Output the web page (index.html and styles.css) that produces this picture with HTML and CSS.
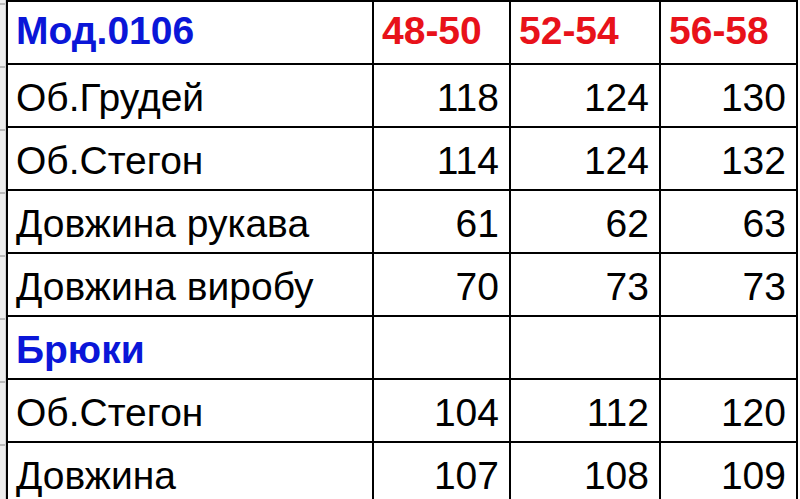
FILE: index.html
```html
<!DOCTYPE html>
<html lang="uk">
<head>
<meta charset="utf-8">
<title>Мод.0106</title>
<link rel="stylesheet" href="styles.css">
</head>
<body>
<div class="sheet">
  <div class="gutter"></div>
  <div class="main">
    <div class="topstrip">
      <div></div><div></div><div></div><div></div>
    </div>
    <div class="grid">
      <div class="cell head blue">Мод.0106</div>
      <div class="cell head red">48-50</div>
      <div class="cell head red">52-54</div>
      <div class="cell head red">56-58</div>

      <div class="cell">Об.Грудей</div>
      <div class="cell num">118</div>
      <div class="cell num">124</div>
      <div class="cell num">130</div>

      <div class="cell">Об.Стегон</div>
      <div class="cell num">114</div>
      <div class="cell num">124</div>
      <div class="cell num">132</div>

      <div class="cell">Довжина рукава</div>
      <div class="cell num">61</div>
      <div class="cell num">62</div>
      <div class="cell num">63</div>

      <div class="cell">Довжина виробу</div>
      <div class="cell num">70</div>
      <div class="cell num">73</div>
      <div class="cell num">73</div>

      <div class="cell bold blue">Брюки</div>
      <div class="cell num"></div>
      <div class="cell num"></div>
      <div class="cell num"></div>

      <div class="cell">Об.Стегон</div>
      <div class="cell num">104</div>
      <div class="cell num">112</div>
      <div class="cell num">120</div>

      <div class="cell">Довжина</div>
      <div class="cell num">107</div>
      <div class="cell num">108</div>
      <div class="cell num">109</div>
    </div>
  </div>
</div>
</body>
</html>
```
FILE: styles.css
```css
html, body {
  margin: 0;
  padding: 0;
  background: #ffffff;
  height: 499px;
  overflow: hidden;
}

.sheet {
  display: flex;
  height: 499px;
  font-family: "Liberation Sans", Arial, sans-serif;
}

.gutter {
  width: 5px;
  flex: none;
  border-right: 1px solid #cfcfcf;
  background-color: #ededed;
  background-image: linear-gradient(
    to bottom,
    transparent 0px,
    transparent 61px,
    #b9b9b9 61px,
    #b9b9b9 63px
  );
  background-size: 100% 63px;
  background-position: 0 5px;
}

.main {
  display: flex;
  flex-direction: column;
}

.topstrip {
  height: 3px;
  display: grid;
  grid-template-columns: 366px 137px 150px 137px;
}

.topstrip div {
  border-right: 1px solid #d4d4d4;
}

.grid {
  display: grid;
  grid-template-columns: 364px 135px 148px 135px;
  grid-auto-rows: 61px;
  gap: 2px;
  padding: 2px;
  background: #000000;
  width: max-content;
}

.cell {
  background: #ffffff;
  display: flex;
  align-items: center;
  padding: 5px 9px 0 8px;
  font-size: 39px;
  color: #000000;
  white-space: nowrap;
  overflow: hidden;
}

.head {
  padding-top: 0;
  padding-bottom: 3px;
  font-weight: bold;
}

.bold {
  font-weight: bold;
}

.blue {
  color: #0a16d8;
}

.red {
  color: #e8121a;
}

.num {
  justify-content: flex-end;
  padding-right: 10px;
}
```
